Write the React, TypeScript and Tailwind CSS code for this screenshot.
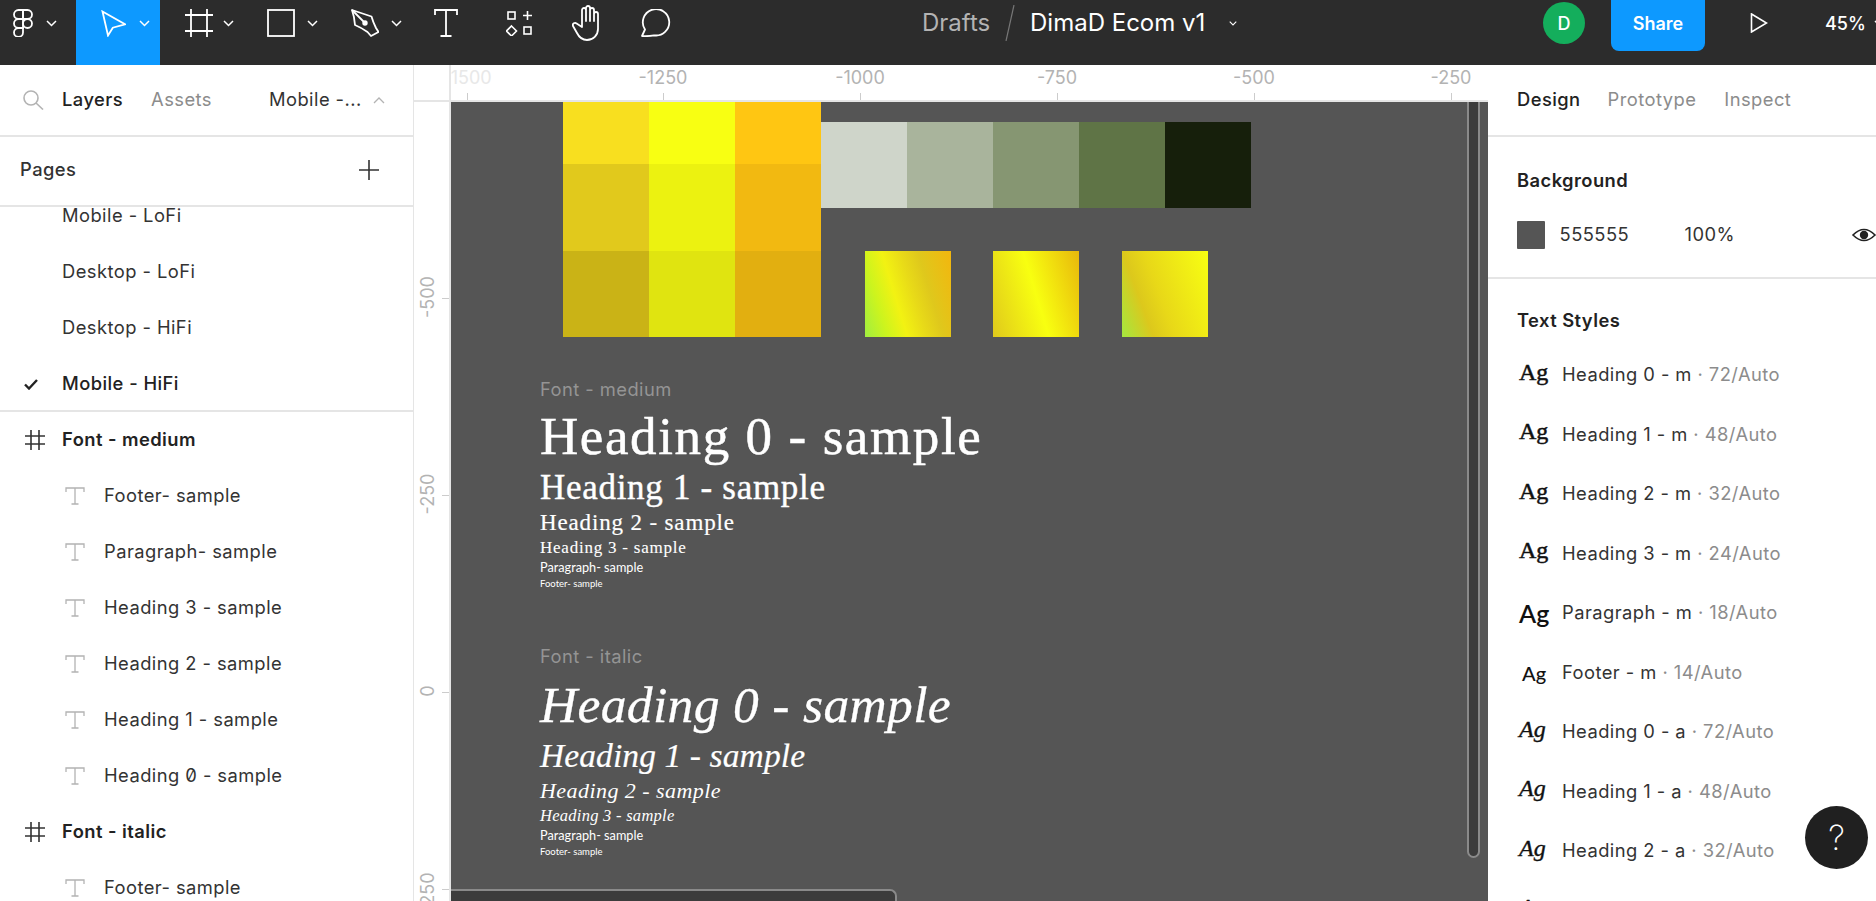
import React from "react";

const Chevron = ({ className = "" }: { className?: string }) => (
  <svg width="11" height="7" viewBox="0 0 11 7" fill="none" stroke="white" strokeWidth="1.5" className={className}>
    <path d="M1 1l4.5 4.5L10 1" />
  </svg>
);

const TextIcon = () => (
  <svg width="20" height="18" viewBox="0 0 20 18" fill="none" stroke="#b3b3b3" strokeWidth="1.3" className="shrink-0">
    <path d="M1 5V1h18v4M10 1v16M6.5 17h7" />
  </svg>
);

const FrameIcon = () => (
  <svg width="20" height="20" viewBox="0 0 20 20" fill="none" stroke="#333333" strokeWidth="1.6" className="shrink-0">
    <path d="M0 6h20M0 14h20M6 0v20M14 0v20" />
  </svg>
);

const PageRow = ({ label, active = false }: { label: string; active?: boolean }) => (
  <div className={active ? "h-[56px] flex items-center border-b-2 border-[#e5e5e5] pt-[2px] pl-[24px] text-[#222222] font-medium" : "h-[56px] flex items-center pl-[62px] text-[#333333]"}>
    {active && (
      <svg width="14" height="11" viewBox="0 0 14 11" fill="none" stroke="#222222" strokeWidth="2.4" className="mr-[24px] shrink-0">
        <path d="M1 5.5L5 9.5L13 1" />
      </svg>
    )}
    {label}
  </div>
);

const FrameRow = ({ label }: { label: string }) => (
  <div className="h-[56px] flex items-center pl-[25px] gap-[17px] font-semibold text-[#222222]">
    <FrameIcon />
    {label}
  </div>
);

const TextRow = ({ children }: { children: React.ReactNode }) => (
  <div className="h-[56px] flex items-center pl-[65px] gap-[19px] text-[#333333]">
    <TextIcon />
    <span>{children}</span>
  </div>
);

type AgKind = "serif" | "italic" | "para" | "foot";

const Ag = ({ kind }: { kind: AgKind }) => {
  if (kind === "serif")
    return <span className="w-[43px] font-['Liberation_Serif',serif] text-[24px] tracking-normal text-[#111111] -mt-[6px] [-webkit-text-stroke:0.5px_#111111]">Ag</span>;
  if (kind === "italic")
    return <span className="w-[43px] font-['Liberation_Serif',serif] text-[24px] tracking-normal italic text-[#111111] -mt-[6px] [-webkit-text-stroke:0.4px_#111111]">Ag</span>;
  if (kind === "para")
    return <span className="w-[43px] font-['Lato',sans-serif] text-[25px] tracking-normal text-[#111111] font-semibold leading-[28px]">Ag</span>;
  return <span className="w-[43px] pl-[3px] font-['Lato',sans-serif] text-[20px] tracking-normal text-[#111111] font-medium leading-[28px] mt-[2px]">Ag</span>;
};

const StyleRow = ({ kind, name, spec }: { kind: AgKind; name: string; spec: string }) => (
  <div className="h-[59.5px] flex items-center pl-[31px] whitespace-nowrap">
    <Ag kind={kind} />
    <span className="text-[#333333]">{name}</span>
    <span className="text-[#8c8c8c]">&nbsp;· {spec}</span>
  </div>
);

const styles: { kind: AgKind; name: string; spec: string }[] = [
  { kind: "serif", name: "Heading 0 - m", spec: "72/Auto" },
  { kind: "serif", name: "Heading 1 - m", spec: "48/Auto" },
  { kind: "serif", name: "Heading 2 - m", spec: "32/Auto" },
  { kind: "serif", name: "Heading 3 - m", spec: "24/Auto" },
  { kind: "para", name: "Paragraph - m", spec: "18/Auto" },
  { kind: "foot", name: "Footer - m", spec: "14/Auto" },
  { kind: "italic", name: "Heading 0 - a", spec: "72/Auto" },
  { kind: "italic", name: "Heading 1 - a", spec: "48/Auto" },
  { kind: "italic", name: "Heading 2 - a", spec: "32/Auto" },
  { kind: "italic", name: "Heading 3 - a", spec: "24/Auto" },
];

const serifLine = "font-['Liberation_Serif',serif] text-white whitespace-nowrap";
const smallLine = "font-['Lato',sans-serif] text-white whitespace-nowrap tracking-normal";

export default function App() {
  return (
    <div className="w-[1876px] h-[901px] overflow-hidden flex flex-col bg-white font-['Inter',sans-serif] text-[18.33px] tracking-[0.45px]">
      {/* Toolbar */}
      <div className="h-[65px] shrink-0 bg-[#2c2c2c] flex overflow-hidden text-white text-[18px] tracking-normal">
        <div className="w-[76px] h-[65px] pb-[19px] pl-[13px] flex items-center gap-[13px] shrink-0">
          <svg width="20" height="28" viewBox="0 0 20 28" fill="none" stroke="white" strokeWidth="1.8">
            <path d="M10 1H5.5a4.5 4.5 0 0 0 0 9H10Z" />
            <path d="M10 1h4.5a4.5 4.5 0 0 1 0 9H10Z" />
            <path d="M10 10H5.5a4.5 4.5 0 0 0 0 9H10Z" />
            <circle cx="14.5" cy="14.5" r="4.5" />
            <path d="M5.5 19H10v4.5A4.5 4.5 0 1 1 5.5 19Z" />
          </svg>
          <Chevron />
        </div>
        <div className="w-[84px] h-[65px] pb-[19px] pl-[25px] bg-[#0d99ff] flex items-center gap-[13px] shrink-0">
          <svg width="25" height="27" viewBox="0 0 25 27" fill="none" stroke="white" strokeWidth="1.8">
            <path d="M1.5 1.5L24 14.3L11.8 17.7L7 25.5Z" />
          </svg>
          <Chevron />
        </div>
        <div className="w-[85px] h-[65px] pb-[19px] pl-[25px] flex items-center gap-[10px] shrink-0">
          <svg width="28" height="28" viewBox="0 0 28 28" fill="none" stroke="white" strokeWidth="1.8">
            <path d="M0 6h28M0 22h28M6 0v28M22 0v28" />
          </svg>
          <Chevron />
        </div>
        <div className="w-[85px] h-[65px] pb-[19px] pl-[22px] flex items-center gap-[12px] shrink-0">
          <svg width="28" height="28" viewBox="0 0 28 28" fill="none" stroke="white" strokeWidth="1.8">
            <rect x="1" y="1" width="26" height="26" />
          </svg>
          <Chevron />
        </div>
        <div className="w-[84px] h-[65px] pb-[19px] pl-[21px] flex items-center gap-[12px] shrink-0">
          <svg width="28" height="28" viewBox="0 0 28 28" fill="none" stroke="white" strokeWidth="1.8" strokeLinejoin="round">
            <path d="M1 1L20.5 7.5Q22 13 25 19L27.5 23L20 27L16.5 23Q10 18.5 4 16Q3.5 8 1 1Z" />
            <path d="M1 1L12.5 12.5" />
            <circle cx="14" cy="14" r="1.8" fill="white" />
          </svg>
          <Chevron />
        </div>
        <div className="h-[65px] pb-[19px] ml-[20px] flex items-center shrink-0">
          <svg width="24" height="28" viewBox="0 0 24 28" fill="none" stroke="white" strokeWidth="1.8">
            <path d="M1 6V1h22v5M12 1v26M6.5 27h11" />
          </svg>
        </div>
        <div className="h-[65px] pb-[19px] ml-[48px] flex items-center shrink-0">
          <svg width="26" height="26" viewBox="0 0 26 26" fill="none" stroke="white" strokeWidth="1.6">
            <rect x="2" y="2" width="7" height="7" />
            <path d="M17 5.5h9M21.5 1v9" />
            <path d="M5.5 16L10.5 21L5.5 26L0.5 21Z" />
            <rect x="18" y="17" width="7" height="7" />
          </svg>
        </div>
        <div className="h-[65px] pb-[19px] ml-[40px] flex items-center shrink-0">
          <svg width="30" height="36" viewBox="0 0 30 36" fill="none" stroke="white" strokeWidth="1.8" strokeLinecap="round" strokeLinejoin="round">
            <path d="M10 17V5a2 2 0 0 1 4 0v11V3a2 2 0 0 1 4 0v13V5a2 2 0 0 1 4 0v11V9a2 2 0 0 1 4 0v15a11 11 0 0 1-11 11c-5 0-8-3-10-7l-4-7a2.2 2.2 0 0 1 3.6-2.4L10 22Z" />
          </svg>
        </div>
        <div className="h-[65px] pb-[19px] ml-[39px] flex items-center shrink-0">
          <svg width="30" height="28" viewBox="0 0 30 28" fill="none" stroke="white" strokeWidth="1.8" strokeLinejoin="round">
            <path d="M1 27L4 20.5A13.2 13.2 0 1 1 13 26.3Q7 27.5 1 27Z" />
          </svg>
        </div>
        <div className="h-[65px] pb-[19px] ml-[251px] flex items-center shrink-0 text-[24px]">
          <span className="text-[#b3b3b3] w-[83px]">Drafts</span>
          <svg width="10" height="36" viewBox="0 0 10 36" fill="none" stroke="#777777" strokeWidth="1.2">
            <path d="M9 0L1 36" />
          </svg>
          <span className="ml-[15px] w-[199px] whitespace-nowrap">DimaD Ecom v1</span>
          <Chevron className="w-[8px]" />
        </div>
        <div className="h-[65px] pb-[19px] ml-[306px] flex items-center shrink-0">
          <div className="w-[42px] h-[42px] rounded-full bg-[#14ae5c] flex items-center justify-center font-medium">D</div>
        </div>
        <div className="ml-[26px] w-[94px] h-[51px] pb-[4px] bg-[#0d99ff] rounded-b-[8px] flex items-center justify-center font-semibold shrink-0">Share</div>
        <div className="h-[65px] pb-[19px] ml-[45px] flex items-center shrink-0">
          <svg width="18" height="20" viewBox="0 0 18 20" fill="none" stroke="white" strokeWidth="1.6">
            <path d="M1.5 1L16.5 10L1.5 19Z" />
          </svg>
        </div>
        <div className="h-[65px] pb-[19px] ml-[57px] flex items-center gap-[8px] shrink-0 font-medium">
          <span>45%</span>
          <Chevron />
        </div>
      </div>

      <div className="flex flex-1 min-h-0">
        {/* Left panel */}
        <div className="w-[414px] shrink-0 border-r border-[#e5e5e5] flex flex-col overflow-hidden">
          <div className="h-[72px] shrink-0 border-b-2 border-[#e5e5e5] flex items-center relative whitespace-nowrap">
            <svg width="21" height="20" viewBox="0 0 21 20" fill="none" stroke="#b3b3b3" strokeWidth="1.6" className="ml-[23px]">
              <circle cx="8" cy="8" r="7" />
              <path d="M13 13L20 19.5" />
            </svg>
            <span className="ml-[18px] font-medium text-[#222222]">Layers</span>
            <span className="ml-[28px] text-[#8c8c8c]">Assets</span>
            <span className="ml-[57px] text-[#333333]">Mobile -...</span>
            <svg width="12" height="7" viewBox="0 0 12 7" fill="none" stroke="#b3b3b3" strokeWidth="1.3" className="ml-[11px]">
              <path d="M1 6L6 1L11 6" />
            </svg>
          </div>
          <div className="h-[70px] shrink-0 border-b-2 border-[#e5e5e5] pb-[2px] flex items-center justify-between pl-[20px] pr-[34px] font-medium text-[#333333]">
            <span>Pages</span>
            <svg width="20" height="20" viewBox="0 0 20 20" fill="none" stroke="#333333" strokeWidth="1.6">
              <path d="M0 10h20M10 0v20" />
            </svg>
          </div>
          <div className="flex-1 min-h-0 overflow-hidden">
            <div className="-mt-[19px]">
              <PageRow label="Mobile - LoFi" />
              <PageRow label="Desktop - LoFi" />
              <PageRow label="Desktop - HiFi" />
              <PageRow label="Mobile - HiFi" active />
              <FrameRow label="Font - medium" />
              <TextRow>Footer- sample</TextRow>
              <TextRow>Paragraph- sample</TextRow>
              <TextRow>Heading 3 - sample</TextRow>
              <TextRow>Heading 2 - sample</TextRow>
              <TextRow>Heading 1 - sample</TextRow>
              <TextRow>
                Heading <span className="slashed-zero">0</span> - sample
              </TextRow>
              <FrameRow label="Font - italic" />
              <TextRow>Footer- sample</TextRow>
            </div>
          </div>
        </div>

        {/* Middle */}
        <div className="w-[1074px] shrink-0 flex flex-col text-[18px] tracking-normal">
          <div className="h-[37px] shrink-0 border-b-2 border-[#e5e5e5] flex">
            <div className="w-[37px] shrink-0 border-r-2 border-[#e5e5e5]" />
            <div className="flex-1 relative overflow-hidden text-[#b3b3b3]">
              <span className="absolute left-[16px] top-[1px] leading-[24px] -translate-x-1/2 text-[#e8e8e8]">-1500</span>
              <span className="absolute left-[212px] top-[1px] leading-[24px] -translate-x-1/2">-1250</span>
              <span className="absolute left-[409px] top-[1px] leading-[24px] -translate-x-1/2">-1000</span>
              <span className="absolute left-[606px] top-[1px] leading-[24px] -translate-x-1/2">-750</span>
              <span className="absolute left-[803px] top-[1px] leading-[24px] -translate-x-1/2">-500</span>
              <span className="absolute left-[1000px] top-[1px] leading-[24px] -translate-x-1/2">-250</span>
              <span className="absolute left-[16px] top-[28px] w-[1px] h-[7px] bg-[#cccccc]" />
              <span className="absolute left-[212px] top-[28px] w-[1px] h-[7px] bg-[#cccccc]" />
              <span className="absolute left-[409px] top-[28px] w-[1px] h-[7px] bg-[#cccccc]" />
              <span className="absolute left-[606px] top-[28px] w-[1px] h-[7px] bg-[#cccccc]" />
              <span className="absolute left-[803px] top-[28px] w-[1px] h-[7px] bg-[#cccccc]" />
              <span className="absolute left-[1000px] top-[28px] w-[1px] h-[7px] bg-[#cccccc]" />
            </div>
          </div>
          <div className="flex-1 min-h-0 flex">
            <div className="w-[37px] shrink-0 border-r-2 border-[#e5e5e5] relative overflow-hidden text-[#b3b3b3]">
              <span className="absolute left-[13px] top-[195px] -translate-x-1/2 -translate-y-1/2 -rotate-90 whitespace-nowrap">-500</span>
              <span className="absolute left-[13px] top-[392px] -translate-x-1/2 -translate-y-1/2 -rotate-90 whitespace-nowrap">-250</span>
              <span className="absolute left-[13px] top-[589px] -translate-x-1/2 -translate-y-1/2 -rotate-90 whitespace-nowrap">0</span>
              <span className="absolute left-[13px] top-[787px] -translate-x-1/2 -translate-y-1/2 -rotate-90 whitespace-nowrap">250</span>
              <span className="absolute left-[28px] top-[196px] w-[7px] h-[1px] bg-[#cccccc]" />
              <span className="absolute left-[28px] top-[393px] w-[7px] h-[1px] bg-[#cccccc]" />
              <span className="absolute left-[28px] top-[590px] w-[7px] h-[1px] bg-[#cccccc]" />
              <span className="absolute left-[28px] top-[787px] w-[7px] h-[1px] bg-[#cccccc]" />
            </div>

            {/* Canvas */}
            <div className="flex-1 relative overflow-hidden bg-[#555555]">
              <div className="absolute left-[112px] top-0 w-[258px] grid grid-cols-3 grid-rows-[62px_87px_86px]">
                <div className="bg-[#f8df1f]" />
                <div className="bg-[#f8ff12]" />
                <div className="bg-[#ffc612]" />
                <div className="bg-[#e1c91c]" />
                <div className="bg-[#ecf210]" />
                <div className="bg-[#f2b911]" />
                <div className="bg-[#cab316]" />
                <div className="bg-[#e0e410]" />
                <div className="bg-[#e2af10]" />
              </div>
              <div className="absolute left-[370px] top-[20px] w-[430px] h-[86px] flex">
                <div className="flex-1 bg-[#cfd5ca]" />
                <div className="flex-1 bg-[#a9b49c]" />
                <div className="flex-1 bg-[#869672]" />
                <div className="flex-1 bg-[#5f7446]" />
                <div className="flex-1 bg-[#161f0b]" />
              </div>
              <div className="absolute left-[414px] top-[149px] w-[86px] h-[86px] bg-[linear-gradient(73deg,#a0ee40_0%,#ccf41e_20%,#f2f212_38%,#e8da18_55%,#dfc81c_70%,#f3b60e_100%)]" />
              <div className="absolute left-[542px] top-[149px] w-[86px] h-[86px] bg-[linear-gradient(73deg,#e0c91c_0%,#f8ff10_50%,#e8b80c_100%)]" />
              <div className="absolute left-[671px] top-[149px] w-[86px] h-[86px] bg-[linear-gradient(70deg,#a4e840_0%,#dcc81c_27%,#e8d818_45%,#f8ff12_100%)]" />

              <div className="absolute left-[89px] top-[275px] flex flex-col items-start">
                <div className="leading-[24px] text-[18.33px] tracking-[0.45px] text-[#949494]">Font - medium</div>
                <div className={`${serifLine} text-[53px] leading-[70px] tracking-[1.6px] [-webkit-text-stroke:0.5px_white]`}>Heading 0 - sample</div>
                <div className={`${serifLine} text-[35px] leading-[34px] tracking-[0.7px] [-webkit-text-stroke:0.4px_white]`}>Heading 1 - sample</div>
                <div className={`${serifLine} text-[23px] leading-[36px] tracking-[0.85px] [-webkit-text-stroke:0.2px_white]`}>Heading 2 - sample</div>
                <div className={`${serifLine} text-[17px] leading-[14px] tracking-[0.77px] [-webkit-text-stroke:0.1px_white]`}>Heading 3 - sample</div>
                <div className={`${smallLine} text-[12.7px] leading-[25px]`}>Paragraph- sample</div>
                <div className={`${smallLine} text-[9.5px] leading-[7px]`}>Footer- sample</div>

                <div className="mt-[57px] leading-[24px] text-[18.33px] tracking-[0.45px] text-[#949494]">Font - italic</div>
                <div className={`${serifLine} italic text-[51.5px] leading-[73px] tracking-[0.35px] [-webkit-text-stroke:0.3px_white]`}>Heading 0 - sample</div>
                <div className={`${serifLine} italic text-[33.5px] leading-[29px] tracking-[0.1px] [-webkit-text-stroke:0.2px_white]`}>Heading 1 - sample</div>
                <div className={`${serifLine} italic text-[22px] leading-[41px] tracking-[0.45px]`}>Heading 2 - sample</div>
                <div className={`${serifLine} italic text-[16.5px] leading-[9px] tracking-[0.27px]`}>Heading 3 - sample</div>
                <div className={`${smallLine} text-[12.7px] leading-[30px]`}>Paragraph- sample</div>
                <div className={`${smallLine} text-[9.5px] leading-[3px]`}>Footer- sample</div>
              </div>

              <div className="absolute left-[1016px] -top-[2px] w-[13px] h-[758px] bg-[#3c3c3c] border-2 border-[#8a8a8a] rounded-b-[7px]" />
              <div className="absolute left-0 top-[787px] w-[446px] h-[20px] bg-[#3c3c3c] border-t-2 border-r-2 border-[#8a8a8a] rounded-tr-[7px]" />
            </div>
          </div>
        </div>

        {/* Right panel */}
        <div className="flex-1 min-w-0 overflow-hidden relative">
          <div className="h-[72px] border-b-2 border-[#e5e5e5] flex items-center pl-[29px] whitespace-nowrap">
            <span className="font-medium text-[#222222]">Design</span>
            <span className="ml-[27px] text-[#8c8c8c]">Prototype</span>
            <span className="ml-[28px] text-[#8c8c8c]">Inspect</span>
          </div>
          <div className="h-[142px] border-b-2 border-[#e5e5e5] pt-[31px] pl-[29px]">
            <div className="leading-[24px] font-semibold text-[#222222]">Background</div>
            <div className="mt-[29px] h-[28px] flex items-center text-[#333333] whitespace-nowrap">
              <div className="w-[28px] h-[28px] rounded-[1px] bg-[#555555]" />
              <span className="ml-[15px] w-[127px]">555555</span>
              <span className="w-[170px]">100%</span>
              <svg width="24" height="16" viewBox="0 0 24 16" fill="none" className="shrink-0">
                <path d="M1 8Q12 -3 23 8Q12 19 1 8Z" stroke="#222222" strokeWidth="1.6" />
                <circle cx="12" cy="8" r="4.2" fill="#222222" />
              </svg>
            </div>
          </div>
          <div className="pt-[29px]">
            <div className="pl-[29px] leading-[24px] font-semibold text-[#222222]">Text Styles</div>
            <div className="mt-[13px]">
              {styles.map((s) => (
                <StyleRow key={s.name} kind={s.kind} name={s.name} spec={s.spec} />
              ))}
            </div>
          </div>
          <div className="absolute left-[317px] top-[741px] w-[63px] h-[63px] rounded-full bg-[#202020] flex items-center justify-center text-white text-[34px] font-extralight tracking-normal">?</div>
        </div>
      </div>
    </div>
  );
}
